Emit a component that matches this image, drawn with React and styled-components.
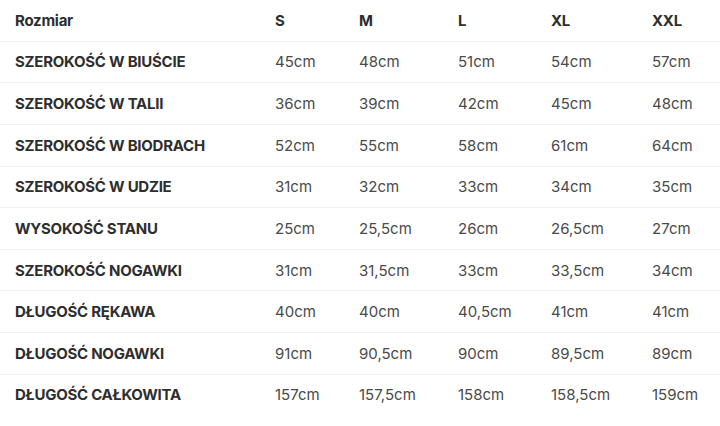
import React from "react";
import styled, { createGlobalStyle } from "styled-components";

const Global = createGlobalStyle`
  html, body { margin: 0; padding: 0; background: #fff; }
  body { font-family: Inter, "Open Sans", sans-serif; }
`;

const Table = styled.div`
  width: 720px;
  display: grid;
  grid-template-columns: 260px 84px 99px 93px 101px 1fr;
`;

const Row = styled.div`
  display: contents;
`;

const Cell = styled.div`
  height: 40.625px;
  display: flex;
  align-items: center;
  padding-left: 15px;
  padding-bottom: 0;
  box-sizing: content-box;
  border-bottom: ${(p) => (p.$last ? "none" : "1px solid #f1f1f1")};
  font-size: 15px;
  font-weight: ${(p) => (p.$bold ? 700 : 400)};
  color: ${(p) => (p.$bold ? "#2e2e2e" : "#4a4a4a")};
  letter-spacing: ${(p) => (p.$bold ? "-0.25px" : "0")};
  white-space: nowrap;
`;

const header = ["Rozmiar", "S", "M", "L", "XL", "XXL"];
const rows = [
  ["SZEROKOŚĆ W BIUŚCIE", "45cm", "48cm", "51cm", "54cm", "57cm"],
  ["SZEROKOŚĆ W TALII", "36cm", "39cm", "42cm", "45cm", "48cm"],
  ["SZEROKOŚĆ W BIODRACH", "52cm", "55cm", "58cm", "61cm", "64cm"],
  ["SZEROKOŚĆ W UDZIE", "31cm", "32cm", "33cm", "34cm", "35cm"],
  ["WYSOKOŚĆ STANU", "25cm", "25,5cm", "26cm", "26,5cm", "27cm"],
  ["SZEROKOŚĆ NOGAWKI", "31cm", "31,5cm", "33cm", "33,5cm", "34cm"],
  ["DŁUGOŚĆ RĘKAWA", "40cm", "40cm", "40,5cm", "41cm", "41cm"],
  ["DŁUGOŚĆ NOGAWKI", "91cm", "90,5cm", "90cm", "89,5cm", "89cm"],
  ["DŁUGOŚĆ CAŁKOWITA", "157cm", "157,5cm", "158cm", "158,5cm", "159cm"],
];

export default function App() {
  return (
    <>
      <Global />
      <Table>
        <Row>
          {header.map((h) => (
            <Cell key={h} $bold>
              {h}
            </Cell>
          ))}
        </Row>
        {rows.map((r, i) => (
          <Row key={r[0]}>
            {r.map((c, j) => (
              <Cell key={j} $bold={j === 0} $last={i === rows.length - 1}>
                {c}
              </Cell>
            ))}
          </Row>
        ))}
      </Table>
    </>
  );
}
